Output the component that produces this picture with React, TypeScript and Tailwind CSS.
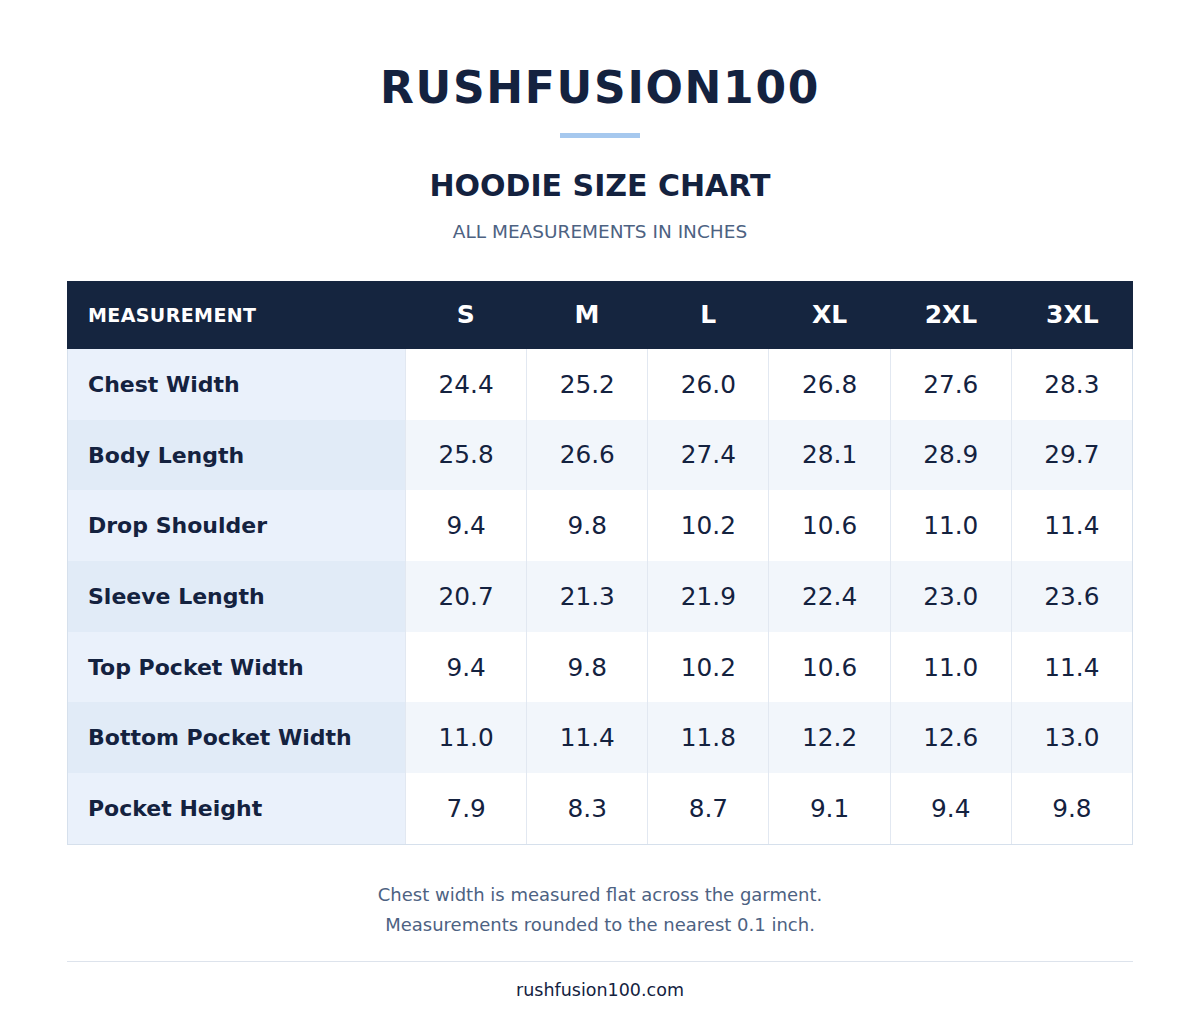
const sizes = ["S", "M", "L", "XL", "2XL", "3XL"]

const rows: { label: string; values: string[] }[] = [
  { label: "Chest Width", values: ["24.4", "25.2", "26.0", "26.8", "27.6", "28.3"] },
  { label: "Body Length", values: ["25.8", "26.6", "27.4", "28.1", "28.9", "29.7"] },
  { label: "Drop Shoulder", values: ["9.4", "9.8", "10.2", "10.6", "11.0", "11.4"] },
  { label: "Sleeve Length", values: ["20.7", "21.3", "21.9", "22.4", "23.0", "23.6"] },
  { label: "Top Pocket Width", values: ["9.4", "9.8", "10.2", "10.6", "11.0", "11.4"] },
  { label: "Bottom Pocket Width", values: ["11.0", "11.4", "11.8", "12.2", "12.6", "13.0"] },
  { label: "Pocket Height", values: ["7.9", "8.3", "8.7", "9.1", "9.4", "9.8"] },
]

export default function App() {
  return (
    <div className="min-h-screen bg-white text-[#14223f] font-['DejaVu_Sans',sans-serif]">
      <div className="mx-auto w-[1066px] pt-[62px]">
        <header className="flex flex-col items-center">
          <h1 className="text-[44px] leading-[52px] font-bold tracking-[1.7px]">RUSHFUSION100</h1>
          <div className="mt-[19px] h-[5px] w-[80px] bg-[#a6c8ee]" />
          <h2 className="mt-[30px] text-[30px] leading-[36px] font-bold">HOODIE SIZE CHART</h2>
          <p className="mt-[16px] text-[18.5px] leading-[24px] text-[#4d6282]">ALL MEASUREMENTS IN INCHES</p>
        </header>

        <div className="mt-[37px] border-x border-b border-[#d6e0ec]">
          <div className="grid grid-cols-[338px_repeat(6,1fr)] h-[68px] bg-[#15253f] text-white items-center -mx-px">
            <div className="pl-[21px] text-[19px] font-bold tracking-[0.4px]">MEASUREMENT</div>
            {sizes.map((s) => (
              <div key={s} className="text-center text-[25px] font-bold">{s}</div>
            ))}
          </div>
          {rows.map((r, i) => (
            <div key={r.label} className="grid grid-cols-[337px_repeat(6,1fr)] h-[70.7px]">
              <div className={`flex items-center pl-[20px] text-[22px] font-bold ${i % 2 ? "bg-[#e1ebf7]" : "bg-[#eaf1fb]"}`}>
                {r.label}
              </div>
              {r.values.map((v, j) => (
                <div
                  key={j}
                  className={`flex items-center justify-center text-[24.75px] border-l border-[#e2e8f1] ${i % 2 ? "bg-[#f2f6fb]" : "bg-white"}`}
                >
                  {v}
                </div>
              ))}
            </div>
          ))}
        </div>

        <div className="mt-[35px] flex flex-col items-center text-[18px] leading-[30px] text-[#4d6282]">
          <p>Chest width is measured flat across the garment.</p>
          <p>Measurements rounded to the nearest 0.1 inch.</p>
        </div>
        <div className="mt-[21px] border-t border-[#dde3ec] pt-[17px] text-center text-[17.5px] leading-[22px]">
          rushfusion100.com
        </div>
      </div>
    </div>
  )
}
